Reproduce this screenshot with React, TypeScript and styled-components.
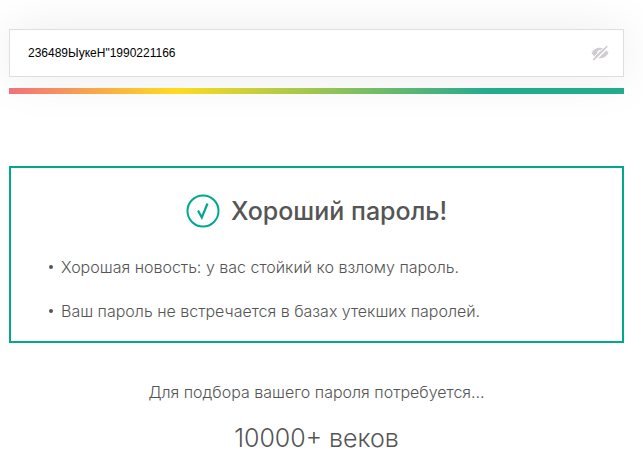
import React, { useState } from 'react';
import styled, { createGlobalStyle } from 'styled-components';

const GlobalStyle = createGlobalStyle`
  *, *::before, *::after { box-sizing: border-box; }
  body {
    margin: 0;
    background: #fff;
    color: #555;
    font-family: Inter, "Noto Sans", sans-serif;
    font-size: 16px;
    font-weight: 300;
    line-height: 24px;
  }
`;

const Page = styled.main`
  padding: 29px 19px 12px 9px;
`;

const Field = styled.div`
  display: flex;
  align-items: center;
  height: 48px;
  padding: 0 14px 0 18px;
  background: #fff;
  border: 1px solid #dededf;
  box-shadow: 0 0 50px rgba(0, 0, 0, 0.08);
`;

const PasswordInput = styled.input`
  flex: 1;
  min-width: 0;
  height: 100%;
  padding: 0;
  border: 0;
  outline: 0;
  background: transparent;
  color: #000;
  font: 400 12px/16px "Liberation Sans", Arial, sans-serif;
`;

const ToggleButton = styled.button`
  display: flex;
  padding: 0;
  border: 0;
  background: transparent;
  color: #d0cdd2;
  cursor: pointer;
`;

const StrengthBar = styled.div`
  position: relative;
  height: 6px;
  margin-top: 11px;
  background: linear-gradient(90deg, #f1717a 0%, #ffdb1f 27%, #23ab8f 78%);
`;

const Result = styled.section`
  margin-top: 72px;
  padding: 24px 36px 18px;
  border: 2px solid #00a88e;
`;

const Title = styled.h1`
  display: flex;
  align-items: center;
  justify-content: center;
  gap: 11px;
  margin: 0;
  font-size: 25px;
  font-weight: 500;
  line-height: 38px;
`;

const Findings = styled.ul`
  display: grid;
  gap: 20px;
  margin: 25px 0 0;
  padding: 0;
  list-style: none;
`;

const Finding = styled.li`
  display: flex;
  align-items: center;
  gap: 8px;

  &::before {
    content: '';
    flex: none;
    width: 4px;
    height: 4px;
    margin-left: 2px;
    border-radius: 50%;
    background: #555;
  }
`;

const Estimate = styled.section`
  margin-top: 37px;
  text-align: center;
`;

const Caption = styled.p`
  margin: 0;
`;

const Duration = styled.p`
  margin: 17px 0 0;
  font-size: 25px;
  line-height: 34px;
`;

function HiddenEyeIcon() {
  return (
    <svg width="18" height="16" viewBox="0 0 18 16" aria-hidden="true">
      <path d="M0.5 8C2.5 4.4 5.400 2.800 9 2.800S15.500 4.400 17.500 8C15.500 11.600 12.600 13.200 9 13.200S2.500 11.600 0.500 8Z" fill="currentColor" />
      <path d="M9 5.200A2.600 2.600 0 0 0 6.500 8" fill="none" stroke="#fff" strokeWidth="1" strokeLinecap="round" />
      <path d="M3.600 15.600L17 3" stroke="#fff" strokeWidth="1.400" />
      <path d="M2.200 14.800L16.200 1.200" stroke="currentColor" strokeWidth="1.800" />
      <path d="M1.200 13.600L15 0.600" stroke="#fff" strokeWidth="1" />
    </svg>
  );
}

function CheckIcon() {
  return (
    <svg width="34" height="34" viewBox="0 0 34 34" fill="none" stroke="#00a88e" strokeWidth="2" aria-hidden="true">
      <circle cx="17" cy="17" r="15.500" />
      <path d="M12 16.500L15.800 23.500L21.500 9.500" strokeWidth="2.200" />
    </svg>
  );
}

const findings = [
  'Хорошая новость: у вас стойкий ко взлому пароль.',
  'Ваш пароль не встречается в базах утекших паролей.',
];

export default function App() {
  const [password, setPassword] = useState('236489ЫукеН"1990221166');
  const [visible, setVisible] = useState(true);

  return (
    <>
      <GlobalStyle />
      <Page>
        <Field>
          <PasswordInput
            aria-label="Пароль"
            type={visible ? 'text' : 'password'}
            value={password}
            spellCheck={false}
            autoComplete="off"
            onChange={(event) => setPassword(event.target.value)}
          />
          <ToggleButton
            type="button"
            aria-label={visible ? 'Скрыть пароль' : 'Показать пароль'}
            onClick={() => setVisible(!visible)}
          >
            <HiddenEyeIcon />
          </ToggleButton>
        </Field>
        <StrengthBar />
        <Result>
          <Title>
            <CheckIcon />
            Хороший пароль!
          </Title>
          <Findings>
            {findings.map((text) => (
              <Finding key={text}>{text}</Finding>
            ))}
          </Findings>
        </Result>
        <Estimate>
          <Caption>Для подбора вашего пароля потребуется...</Caption>
          <Duration>10000+ веков</Duration>
        </Estimate>
      </Page>
    </>
  );
}
